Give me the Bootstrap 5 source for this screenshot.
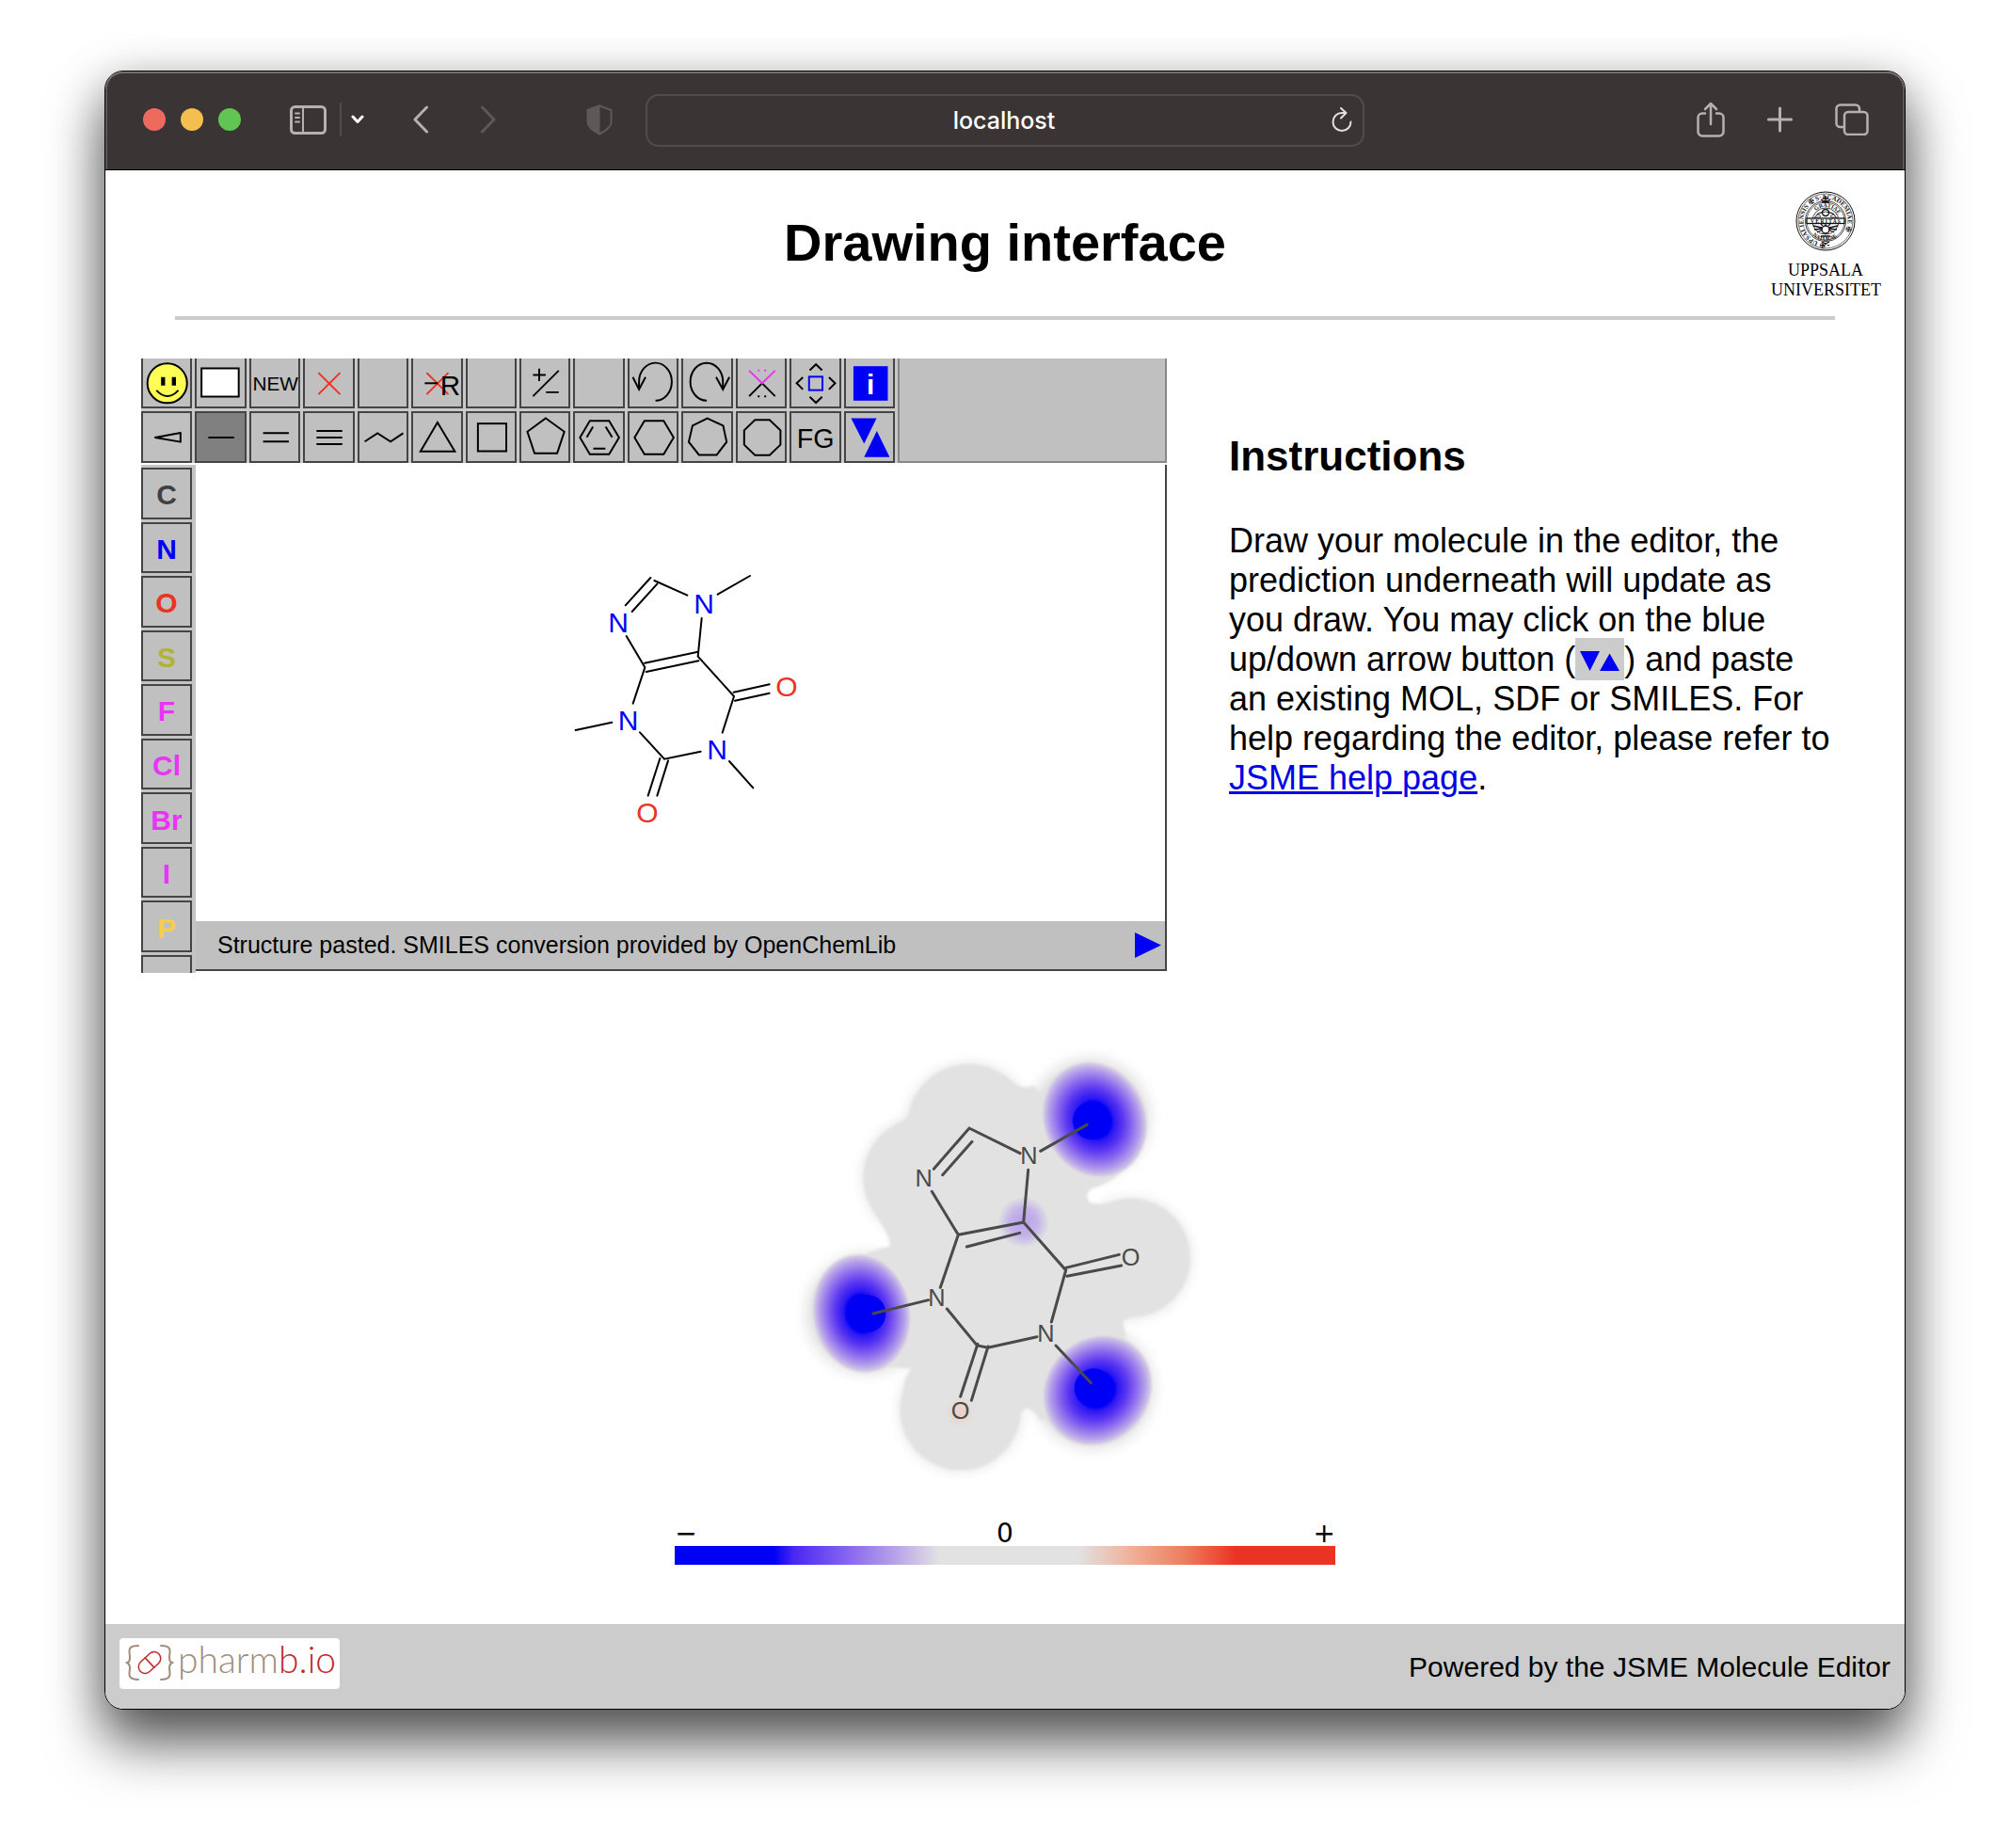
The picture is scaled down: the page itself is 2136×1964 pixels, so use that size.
<!DOCTYPE html>
<html lang="en">
<head>
<meta charset="utf-8">
<meta name="viewport" content="width=device-width, initial-scale=1">
<title>Drawing interface</title>
<link href="https://cdn.jsdelivr.net/npm/bootstrap@5.3.0/dist/css/bootstrap.min.css" rel="stylesheet">
<style>
body { font-family: "Liberation Sans", Arial, sans-serif; color: #000; background: #fff; padding: 75px 111px 148px; }
button { padding: 0; border: 0; background: none; color: inherit; display: block; }
svg { display: block; }
.browser { border: 1px solid #000; border-radius: 20px; background: #fff; box-shadow: 0 36px 60px rgba(0,0,0,.6), 0 10px 50px rgba(0,0,0,.25); }
.chrome-bar { height: 105px; background: #3b3434; border-bottom: 1px solid #000; box-shadow: inset 0 2px 0 #74706c, inset 2px 0 0 #5d5857, inset -2px 0 0 #5d5857; border-radius: 19px 19px 0 0; color: #b7b0b0; }
.chrome-side { flex: 0 0 30%; padding-bottom: 2px; }
.chrome-side svg { fill: none; stroke: currentColor; stroke-width: 3; stroke-linecap: round; stroke-linejoin: round; }
.light { width: 24px; height: 24px; border-radius: 50%; }
.dim { color: #5f5858; }
.address { flex: 0 0 40%; height: 56px; border: 2px solid #524c4b; border-radius: 14px; }
.address input { font: 500 25px Inter, sans-serif; color: #fff; background: none; border: 0; min-width: 0; outline: 0; padding-left: 34px; }
.page-head { display: grid; grid-template-columns: 1fr auto 1fr; height: 155px; padding: 0 26px; }
.page-head h1 { font-size: 56px; font-weight: 700; line-height: 64px; margin: 45px 0 0; }
.crest { width: 116px; margin-top: 22px; font: 18px/21px "Liberation Serif", serif; }
.crest svg { margin-bottom: 10px; }
.rule { height: 4px; background: #ccc; margin: 0 74px; }
.workspace { padding: 41px 76px 0 38px; gap: 66px; }
.editor { flex: 1 1 auto; min-width: 0; }
.instructions { flex: 0 0 642px; padding-top: 79px; }
.instructions h2 { font-size: 44px; font-weight: 700; line-height: 50px; margin-bottom: 44px; }
.instructions p { font-size: 36px; line-height: 42px; margin: 0; }
.instructions a { color: #0000e6; text-decoration-thickness: 3px; }
.arrow-chip { background: #ccc; padding: 2px 5px; }
.arrow-chip svg { display: inline; vertical-align: baseline; }
.toolbar-area { background: #c9c9c9; margin-bottom: 2px; }
.tool-grid { flex: 0 0 804px; display: grid; grid-template-columns: repeat(14, 1fr); gap: 3px; padding-right: 3px; }
.tool { background: #c0c0c0; border: 2px solid #444; overflow: hidden; }
.tool.top-tool { border-top: 0; }
.tool.active { background: #808080; }
.tool svg { width: 100%; height: 51px; fill: none; stroke: #000; stroke-width: 2; }
.tool svg text { fill: #000; stroke: none; font-size: 30px; }
.tool-blank { flex: 1 1 auto; background: #c0c0c0; border: 2px solid #888; border-top: 0; }
.atom-col { flex: 0 0 58px; background: #c4c4c4; padding: 3px 4px 0 0; }
.atom-grid { display: grid; grid-auto-rows: 1fr; gap: 3px; height: 515px; }
.atom { background: #c0c0c0; border: 2px solid #444; padding-top: 4px; font-size: 30px; font-weight: 700; line-height: 34px; width: 100%; }
.atom-more { height: 19px; margin-top: 3px; border-bottom: 0; }
.sheet { height: 485px; border-right: 2px solid #444; }
.status { height: 53px; background: #c0c0c0; border-right: 2px solid #444; border-bottom: 2px solid #444; font-size: 25px; padding: 0 4px 0 23px; }
.lines { fill: none; stroke-linecap: round; }
.legend-box { width: 36.7%; margin: 35px auto 63px; }
.legend-labels { font: 28px/28px "DejaVu Sans", sans-serif; display: grid; grid-template-columns: 1fr auto 1fr; height: 28px; padding-top: 1px; }
.legend-bar { height: 20px; background: linear-gradient(90deg, #0000f5 15%, #4a27f2 18%, #8d6cef 27%, #bba8e8 34%, #e2e2e2 40%, #e2e2e2 61%, #f0b19a 69%, #ee7f5e 77%, #ea3323 85%); }
.page-foot { height: 90px; background: #ccc; border-radius: 0 0 19px 19px; padding: 0 15px; font-size: 30px; }
.brand { width: 234px; height: 54px; background: #fff; border-radius: 4px; margin-bottom: 6px; }
</style>
</head>
<body>
<div class="browser">
  <div class="chrome-bar d-flex align-items-center">
    <div class="chrome-side d-flex align-items-center">
      <div class="d-flex gap-3" style="margin-left:40px">
        <span class="light" style="background:#ed6a5e"></span><span class="light" style="background:#f5bf4f"></span><span class="light" style="background:#61c554"></span>
      </div>
      <button aria-label="Sidebar" style="margin-left:52px"><svg width="39" height="31" viewBox="0 0 39 31"><rect x="1.5" y="1.5" width="36" height="28" rx="4"/><path d="M14 2v27M6 8.500h4M6 13h4M6 17.500h4" stroke-width="2"/></svg></button>
      <span style="width:2px;height:36px;background:#524c4b;margin-left:14px"></span>
      <button aria-label="Tab groups" class="text-white" style="margin-left:10px"><svg width="14" height="10" viewBox="0 0 14 10"><path d="M2 2l5 5.500L12 2"/></svg></button>
      <button aria-label="Back" style="margin-left:52px"><svg width="16" height="30" viewBox="0 0 16 30"><path d="M14.500 2L2 15l12.500 13"/></svg></button>
      <button aria-label="Forward" class="dim" style="margin-left:56px"><svg width="16" height="30" viewBox="0 0 16 30"><path d="M1.500 2L14 15 1.500 28"/></svg></button>
      <button aria-label="Privacy report" class="dim" style="margin-left:96px"><svg width="28" height="33" viewBox="0 0 28 33"><path d="M14 1.500L26.500 6v13c0 5-6 9-12.500 12.500C7.500 28 1.500 24 1.500 19V6z" stroke-width="2"/><path d="M14 1.500v30C7.500 28 1.500 24 1.500 19V6z" fill="currentColor" stroke-width="1"/></svg></button>
    </div>
    <div class="address d-flex align-items-center">
      <input type="text" class="flex-grow-1 text-center" value="localhost" aria-label="Address">
      <button aria-label="Reload" style="margin-right:10px"><svg width="24" height="28" viewBox="0 0 24 28" fill="none" stroke="#e4e0e0" stroke-width="2" stroke-linecap="round" stroke-linejoin="round"><path d="M21.500 15.500A9.500 9.500 0 1 1 12 6h4M11 1l5.500 5L11 11.500"/></svg></button>
    </div>
    <div class="chrome-side d-flex align-items-center justify-content-end" style="padding-right:38px;gap:45px">
      <button aria-label="Share"><svg width="30" height="38" viewBox="0 0 30 38"><path d="M9 12.500H6A4.500 4.500 0 0 0 1.500 17v15A4.500 4.500 0 0 0 6 36.500h18a4.500 4.500 0 0 0 4.500-4.500V17a4.500 4.500 0 0 0-4.500-4.500h-3M15 24V2M9 8l6-6 6 6" stroke-width="2.500"/></svg></button>
      <button aria-label="New tab"><svg width="27" height="28" viewBox="0 0 27 28"><path d="M13.500 2v24M1.500 14h24"/></svg></button>
      <button aria-label="Tab overview"><svg width="36" height="34" viewBox="0 0 36 34"><rect x="10" y="9" width="24.500" height="24" rx="4" stroke-width="2.500"/><path d="M26 8V5.500a4 4 0 0 0-4-4H5.500a4 4 0 0 0-4 4V21a4 4 0 0 0 4 4H9" stroke-width="2.500"/></svg></button>
    </div>
  </div>

  <header class="page-head">
    <span></span>
    <h1>Drawing interface</h1>
    <div class="crest ms-auto text-center">
      <svg class="mx-auto" width="64" height="64" viewBox="0 0 64 64" fill="none" stroke="#111" role="img" aria-label="University seal">
        <circle cx="32" cy="32" r="31"/><circle cx="32" cy="32" r="29" stroke-width=".6"/><circle cx="32" cy="32" r="21.500" stroke-width=".8"/><circle cx="32" cy="32" r="20" stroke-width=".6"/><circle cx="32" cy="32" r="14" stroke-width=".8"/>
        <path id="ringA" d="M32 55.500a23.500 23.500 0 1 1 .1 0" stroke="none"/>
        <path id="ringB" d="M17 32a15 15 0 0 1 30 0" stroke="none"/><path id="ringC" d="M13 34a19 19 0 0 0 38 0" stroke="none"/>
        <g fill="#111" stroke="none" font-family="Liberation Serif, serif" font-weight="700"><text font-size="7"><textPath href="#ringA">✠ UPSALIENSIS ✠ S·ACADEMIAE ✠</textPath></text><text font-size="6"><textPath href="#ringB" startOffset="12">GRATIAE</textPath></text><text font-size="6"><textPath href="#ringC" startOffset="14">NATURAE</textPath></text></g>
        <path d="M20 29q4-7 8-6M44 29q-4-7-8-6M22 26q10-8 20 0M21 28h6M37 28h6M23 24l4 3M41 24l-4 3" stroke-width=".8"/>
        <circle cx="32" cy="23" r="3.500" stroke-width="1.400"/>
        <rect x="12" y="29" width="40" height="5.500" fill="#fff" stroke-width="1.300"/>
        <path d="M19 37l9 2M20 41l8-1M23 44l6-3M45 37l-9 2M44 41l-8-1M41 44l-6-3M32 34v3M27 35l2 2M37 35l-2 2M27 48h10M29 8h6M32 5v7M27 9q5 4 10 0M28 12h8M28 54l8 4M36 54l-8 4" stroke-width="1.300"/>
        <circle cx="32" cy="41" r="4" fill="#fff" stroke-width="1.400"/>
        <text x="32" y="33.500" text-anchor="middle" font-size="5.500" font-weight="700" fill="#111" stroke="none" font-family="Liberation Serif, serif">V E R I T A S</text>
      </svg>
      <div>UPPSALA</div><div>UNIVERSITET</div>
    </div>
  </header>
  <div class="rule"></div>

  <main>
    <div class="workspace d-flex">
      <section class="editor" aria-label="Molecule editor">
        <div class="toolbar-area d-flex">
          <div class="tool-grid">
            <button class="tool top-tool" aria-label="Smiley"><svg viewBox="2 2 51 51"><circle cx="28" cy="28.300" r="21.300" fill="#ffff54"/><path d="M21.400 21.700h4.300v9h-4.300zM33 21.700h4.400v9H33z" fill="#000" stroke="none"/><path d="M16.400 36q11.800 12.500 23.600 0"/></svg></button>
            <button class="tool top-tool" aria-label="Query"><svg viewBox="2 2 51 51"><rect x="7.200" y="12.300" width="40" height="30.400" fill="#fff"/></svg></button>
            <button class="tool top-tool" aria-label="New"><svg viewBox="2 2 51 51"><text x="28" y="36" text-anchor="middle" style="font-size:21px">NEW</text></svg></button>
            <button class="tool top-tool" aria-label="Delete"><svg viewBox="2 2 51 51"><path d="M16.500 17l23.400 23.300m0-23.300L16.500 40.300" stroke="#ea3323"/></svg></button>
            <button class="tool top-tool" aria-label="Unused"><svg viewBox="2 2 51 51"></svg></button>
            <button class="tool top-tool" aria-label="Delete group"><svg viewBox="2 2 51 51"><path d="M16.500 17l23.400 23.300m0-23.300L16.500 40.300" stroke="#ea3323"/><path d="M14.500 28.300h14"/><text x="31" y="41">R</text></svg></button>
            <button class="tool top-tool" aria-label="Unused"><svg viewBox="2 2 51 51"></svg></button>
            <button class="tool top-tool" aria-label="Charge"><svg viewBox="2 2 51 51"><path d="M14.500 19.300h13.700M21.200 12.700V26M14.500 42.300l27.700-27.600M28.500 38h13.700"/></svg></button>
            <button class="tool top-tool" aria-label="Unused"><svg viewBox="2 2 51 51"></svg></button>
            <button class="tool top-tool" aria-label="Undo"><svg viewBox="2 2 51 51"><path d="M12.200 35V27A17.600 20.300 0 1 1 29.900 47M5.500 21.700L12.200 35l7-13.300"/></svg></button>
            <button class="tool top-tool" aria-label="Redo"><svg viewBox="2 2 51 51"><path d="M44.700 35V27A17.500 20.300 0 1 0 27.400 47M37.400 21.700L44.700 35l7-13.300"/></svg></button>
            <button class="tool top-tool" aria-label="Spiro"><svg viewBox="2 2 51 51"><path d="M14.200 42.300l14-14 14 14M23.500 42.300h2M30.500 42.300h2"/><path d="M14.200 14.700l14 13.600 14-13.600M23.500 14.700h2M30.500 14.700h2" stroke="#ea33f7"/></svg></button>
            <button class="tool top-tool" aria-label="Move"><svg viewBox="2 2 51 51"><path d="M21.700 14.300L28.400 8l6.600 6.300M21.700 43l6.700 6.300L35 43M14.400 22l-6.700 6.300 6.700 6.700M42.400 22l6.600 6.300-6.600 6.700"/><rect x="21" y="21.300" width="14.400" height="14.400" stroke="#0000f5"/></svg></button>
            <button class="tool top-tool" aria-label="Info"><svg viewBox="2 2 51 51"><rect x="10" y="10" width="37" height="37" fill="#0000f5" stroke="none"/><text x="28.500" y="40" text-anchor="middle" font-weight="700" style="fill:#fff">i</text></svg></button>

            <button class="tool" aria-label="Stereo bond"><svg viewBox="2 2 51 51"><path d="M15 28l27.300-5v9.700z" stroke-linejoin="round"/></svg></button>
            <button class="tool active" aria-label="Single bond"><svg viewBox="2 2 51 51"><path d="M14.500 28h27.700"/></svg></button>
            <button class="tool" aria-label="Double bond"><svg viewBox="2 2 51 51"><path d="M14.700 23.300h27.700M14.700 32.300h27.700"/></svg></button>
            <button class="tool" aria-label="Triple bond"><svg viewBox="2 2 51 51"><path d="M14.500 21h27.700M14.500 28h27.700M14.500 35h27.700"/></svg></button>
            <button class="tool" aria-label="Chain"><svg viewBox="2 2 51 51"><path d="M7.700 32.300l13.700-9 14 9 13.600-9"/></svg></button>
            <button class="tool" aria-label="Triangle"><svg viewBox="2 2 51 51"><path d="M28.200 11.700L9.900 43h37z"/></svg></button>
            <button class="tool" aria-label="Square"><svg viewBox="2 2 51 51"><rect x="13" y="13" width="30.500" height="29.700"/></svg></button>
            <button class="tool" aria-label="Pentagon"><svg viewBox="2 2 51 51"><path d="M28.200 7.300l20 14.400L40.500 45H16.200L8.500 21.700z"/></svg></button>
            <button class="tool" aria-label="Benzene"><svg viewBox="2 2 51 51"><path d="M7.400 28L18 10h20.700l10.700 18-10.700 18H18zM14.700 27.700l6.700-11.400M35 16.300l7 11.400M21.700 40h13"/></svg></button>
            <button class="tool" aria-label="Hexagon"><svg viewBox="2 2 51 51"><path d="M7.400 28L18 10h20.700l10.700 18-10.700 18H18z"/></svg></button>
            <button class="tool" aria-label="Heptagon"><svg viewBox="2 2 51 51"><path d="M28 7.300l17 8 3.700 17.400-10.700 14H19L8 32.700l4-17.400z"/></svg></button>
            <button class="tool" aria-label="Octagon"><svg viewBox="2 2 51 51"><path d="M20.500 9h15.700l11.700 11.300v15.400L36.200 47H20.500L8.900 35.700V20.300z"/></svg></button>
            <button class="tool" aria-label="Functional groups"><svg viewBox="2 2 51 51"><text x="28" y="39.500" text-anchor="middle" style="font-size:29px">FG</text></svg></button>
            <button class="tool" aria-label="Import and export"><svg viewBox="2 2 51 51"><path d="M7.500 7.300h27.400L21.500 34.700zM35.200 21l13.700 28H21.500z" fill="#0000f5" stroke="none"/></svg></button>
          </div>
          <div class="tool-blank"></div>
        </div>
        <div class="d-flex">
          <div class="atom-col">
            <div class="atom-grid">
              <button class="atom" style="color:#404040">C</button>
              <button class="atom" style="color:#0000f5">N</button>
              <button class="atom" style="color:#ea3323">O</button>
              <button class="atom" style="color:#b2b235">S</button>
              <button class="atom" style="color:#ea33f7">F</button>
              <button class="atom" style="color:#ea33f7">Cl</button>
              <button class="atom" style="color:#ea33f7">Br</button>
              <button class="atom" style="color:#ea33f7">I</button>
              <button class="atom" style="color:#f7ce46">P</button>
            </div>
            <button class="atom atom-more" aria-label="More atoms"></button>
          </div>
          <div class="flex-grow-1">
            <div class="sheet d-flex align-items-center justify-content-center">
              <svg width="290" height="300" viewBox="-36 -9 870 900" role="img" aria-label="Caffeine structure">
                <g class="lines" stroke="#000" stroke-width="6">
                  <path d="M224 160L304 72M245 180L325 92M316 81L421 128M518 125L621 66M467 201L455 323M227 258L286 358M285 344L452 309M290 372L457 337M286 358L248 473M455 323L570 450M569 437L683 412M573 464L683 440M570 450L533 566M181 533L65 558M270 565L348 650L464 626M555 657L631 742M334 648L296 767M360 655L325 767"/>
                </g>
                <g font-size="90" text-anchor="middle" fill="#0000f5"><text x="201" y="245">N</text><text x="474" y="185">N</text><text x="233" y="557">N</text><text x="516" y="650">N</text></g>
                <g font-size="90" text-anchor="middle" fill="#ea3323"><text x="738" y="449">O</text><text x="294" y="851">O</text></g>
              </svg>
            </div>
            <div class="status d-flex align-items-center justify-content-between">
              <span>Structure pasted. SMILES conversion provided by OpenChemLib</span>
              <button aria-label="Show more"><svg width="28" height="27" viewBox="0 0 28 27"><path d="M0 0l28 13.500L0 27z" fill="#0000f5"/></svg></button>
            </div>
          </div>
        </div>
      </section>

      <section class="instructions">
        <h2>Instructions</h2>
        <p>Draw your molecule in the editor, the prediction underneath will update as you draw. You may click on the blue up/down arrow button (<span class="arrow-chip"><svg width="42" height="21" viewBox="0 0 42 21"><path d="M0 0h21L10.500 21zM31.500 2.500L42 21H21z" fill="#0000f5"/></svg></span>) and paste an existing MOL, SDF or SMILES. For help regarding the editor, please refer to <a href="#help">JSME help page</a>.</p>
      </section>
    </div>

    <svg class="mx-auto" style="margin-top:66px" width="450" height="480" viewBox="9 0 1350 1440" overflow="visible" role="img" aria-label="Prediction heat map">
      <defs>
        <filter id="soft" x="-20%" y="-20%" width="140%" height="140%"><feGaussianBlur stdDeviation="20"/></filter>
        <filter id="edge" x="-20%" y="-20%" width="140%" height="140%"><feGaussianBlur stdDeviation="5"/></filter>
        <radialGradient id="hot"><stop offset=".3" stop-color="#0000f5"/><stop offset=".36" stop-color="#2b17f4"/><stop offset=".52" stop-color="#5a36f1"/><stop offset=".68" stop-color="#8866ee"/><stop offset=".84" stop-color="#b39dea"/><stop offset=".93" stop-color="#cfc4e6"/><stop offset="1" stop-color="#e2e2e2" stop-opacity="0"/></radialGradient>
        <radialGradient id="mild"><stop offset="0" stop-color="#b7a0ec"/><stop offset=".55" stop-color="#c4b4e8"/><stop offset="1" stop-color="#e2e2e2"/></radialGradient>
        <radialGradient id="warm"><stop offset="0" stop-color="#edcdc3"/><stop offset="1" stop-color="#e2e2e2"/></radialGradient>
      </defs>
      <g fill="#e2e2e2" filter="url(#soft)">
        <circle cx="570" cy="290" r="198"/><circle cx="425" cy="455" r="193"/><circle cx="760" cy="385" r="190"/><circle cx="1085" cy="712" r="190"/><circle cx="542" cy="1195" r="193"/><circle cx="955" cy="265" r="192"/><circle cx="243" cy="888" r="194"/><circle cx="965" cy="1125" r="196"/>
      </g>
      <g fill="#e2e2e2" filter="url(#edge)">
        <circle cx="570" cy="290" r="197"/><circle cx="425" cy="455" r="192"/><circle cx="1085" cy="710" r="189"/><circle cx="542" cy="1195" r="192"/>
        <circle cx="955" cy="275" r="182"/><circle cx="247" cy="883" r="182"/><circle cx="965" cy="1122" r="184"/>
        <path d="M360 275Q395 235 410 180L660 120Q745 185 770 160L1080 400Q1040 470 960 490Q935 510 955 535Q990 545 1050 530L1160 880Q1080 895 1060 915L1070 960L800 1230Q755 1170 740 1200L600 1250L360 1130Q365 1090 385 1065L250 1050L240 700Q290 675 315 675Q325 655 270 570Z"/>
      </g>
      <circle cx="743" cy="597" r="82" fill="url(#mild)"/><circle cx="542" cy="1203" r="48" fill="url(#warm)"/>
      <ellipse cx="970" cy="270" rx="168" ry="194" fill="url(#hot)" transform="rotate(-24 970 270)"/>
      <ellipse cx="227" cy="888" rx="160" ry="196" fill="url(#hot)" transform="rotate(-10 227 888)"/>
      <ellipse cx="979" cy="1133" rx="170" ry="190" fill="url(#hot)" transform="rotate(42 979 1133)"/>
      <g fill="#0000f5"><circle cx="960" cy="273" r="60"/><circle cx="244" cy="888" r="60"/><circle cx="967" cy="1125" r="62"/></g>
      <g class="lines" stroke="#4a4a4a" stroke-width="9">
        <path d="M457 427L570 297L732 377M485 446L579 340M797 370L945 286M758 430L743 597L878 750L832 915M451 499L535 637L743 597M562 675L731 631M535 637L478 805M440 845L264 888M499 873L595 990L630 997L786 962M846 990L958 1109M878 742L1048 700M882 769L1055 735M597 985L542 1153M630 993L577 1165"/>
      </g>
      <g font-size="76" text-anchor="middle" fill="#4a4a4a"><text x="425" y="482">N</text><text x="760" y="411">N</text><text x="466" y="864">N</text><text x="814" y="978">N</text><text x="1085" y="735">O</text><text x="542" y="1223">O</text></g>
    </svg>

    <div class="legend-box">
      <div class="legend-labels"><span>−</span><span>0</span><span class="text-end">+</span></div>
      <div class="legend-bar"></div>
    </div>
  </main>

  <footer class="page-foot d-flex align-items-center justify-content-between">
    <a class="brand" href="#pharmbio" aria-label="pharmb.io">
      <svg width="234" height="54" viewBox="0 0 234 54" fill="none" stroke-linecap="round">
        <path d="M20 8C7 8 11 15 11 20s-1 5-3 6c2 1 3 2 3 6s-4 12 9 12M44 8c13 0 9 7 9 12s1 5 3 6c-2 1-3 2-3 6s4 12-9 12" stroke="#a28c7c" stroke-width="2"/>
        <g transform="rotate(-43 32 26)" stroke="#be2a2a" stroke-width="1.500"><rect x="18.500" y="19" width="27" height="14" rx="7"/><path d="M32 19v14"/></g>
        <text x="62" y="37" font-family="Lato, sans-serif" font-weight="300" font-size="39" fill="#a28c7c">pharm<tspan fill="#be2a2a">b.io</tspan></text>
      </svg>
    </a>
    <span>Powered by the JSME Molecule Editor</span>
  </footer>
</div>
<script src="https://cdn.jsdelivr.net/npm/bootstrap@5.3.0/dist/js/bootstrap.bundle.min.js"></script>
</body>
</html>
